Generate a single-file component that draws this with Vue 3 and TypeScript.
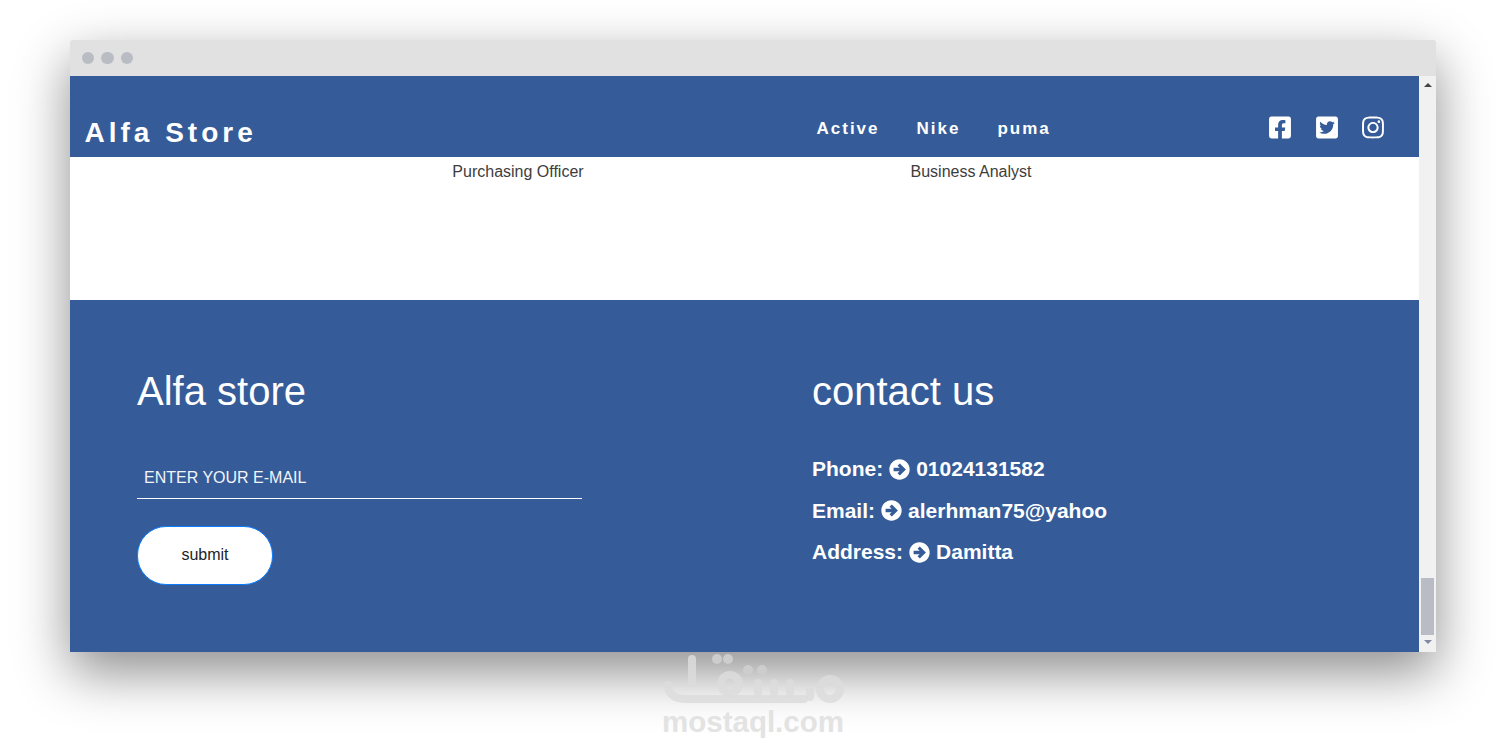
<script setup lang="ts">
const navLinks = ['Active', 'Nike', 'puma']

const people = ['Purchasing Officer', 'Business Analyst']

const contacts = [
  { label: 'Phone:', value: '01024131582' },
  { label: 'Email:', value: 'alerhman75@yahoo' },
  { label: 'Address:', value: 'Damitta' }
]
</script>

<template>
  <div class="stage">
    <div class="browser">
      <div class="titlebar">
        <span class="dot"></span>
        <span class="dot"></span>
        <span class="dot"></span>
      </div>

      <div class="viewport">
        <div class="page">
          <header class="navbar">
            <div class="brand">Alfa Store</div>
            <nav class="links">
              <a v-for="link in navLinks" :key="link">{{ link }}</a>
            </nav>
            <div class="social">
              <svg viewBox="0 0 448 512" class="social-icon">
                <path d="M400 32H48A48 48 0 0 0 0 80v352a48 48 0 0 0 48 48h137.25V327.69h-63V256h63v-54.64c0-62.15 37-96.48 93.67-96.48 27.14 0 55.52 4.84 55.52 4.84v61h-31.27c-30.81 0-40.42 19.12-40.42 38.73V256h68.78l-11 71.69h-57.78V480H400a48 48 0 0 0 48-48V80a48 48 0 0 0-48-48z" />
              </svg>
              <svg viewBox="0 0 448 512" class="social-icon">
                <path d="M400 32H48C21.5 32 0 53.5 0 80v352c0 26.5 21.5 48 48 48h352c26.5 0 48-21.5 48-48V80c0-26.5-21.5-48-48-48zm-48.9 158.8c.2 2.8.2 5.7.2 8.5 0 86.7-66 186.6-186.6 186.6-37.2 0-71.7-10.8-100.7-29.4 5.3.6 10.4.8 15.8.8 30.7 0 58.9-10.4 81.4-28-28.8-.6-53-19.5-61.3-45.5 10.1 1.5 19.2 1.5 29.6-1.2-30-6.1-52.5-32.5-52.5-64.4v-.8c8.7 4.9 18.9 7.9 29.6 8.3a65.447 65.447 0 0 1-29.2-54.6c0-12.2 3.2-23.4 8.9-33.1 32.3 39.8 80.8 65.8 135.2 68.6-9.3-44.5 24-80.6 64-80.6 18.9 0 35.9 7.9 47.9 20.7 14.8-2.8 29-7.2 41.6-14.8-4.9 15.2-15.2 28-28.8 36.1 13.2-1.4 26-5.1 37.8-10.2-8.9 13.1-20.1 24.7-32.9 34z" />
              </svg>
              <svg viewBox="0 0 448 512" class="social-icon">
                <path d="M224.1 141c-63.6 0-114.9 51.3-114.9 114.9s51.3 114.9 114.9 114.9S339 319.5 339 255.9 287.7 141 224.1 141zm0 189.6c-41.1 0-74.7-33.5-74.7-74.7s33.5-74.7 74.7-74.7 74.7 33.5 74.7 74.7-33.6 74.7-74.7 74.7zm146.4-194.3c0 14.9-12 26.8-26.8 26.8-14.9 0-26.8-12-26.8-26.8s12-26.8 26.8-26.8 26.8 12 26.8 26.8zm76.1 27.2c-1.7-35.9-9.9-67.7-36.2-93.9-26.2-26.2-58-34.4-93.9-36.2-37-2.1-147.9-2.1-184.9 0-35.8 1.7-67.6 9.9-93.9 36.1s-34.4 58-36.2 93.9c-2.1 37-2.1 147.9 0 184.9 1.7 35.9 9.9 67.7 36.2 93.9s58 34.4 93.9 36.2c37 2.1 147.9 2.1 184.9 0 35.9-1.7 67.7-9.9 93.9-36.2 26.2-26.2 34.4-58 36.2-93.9 2.1-37 2.1-147.8 0-184.8zM398.8 388c-7.8 19.6-22.9 34.7-42.6 42.6-29.5 11.7-99.5 9-132.1 9s-102.7 2.6-132.1-9c-19.6-7.8-34.7-22.9-42.6-42.6-11.7-29.5-9-99.5-9-132.1s-2.6-102.7 9-132.1c7.8-19.6 22.9-34.7 42.6-42.6 29.5-11.7 99.5-9 132.1-9s102.7-2.6 132.1 9c19.6 7.8 34.7 22.9 42.6 42.6 11.7 29.5 9 99.5 9 132.1s2.7 102.7-9 132.1z" />
              </svg>
            </div>
          </header>

          <section class="team">
            <p v-for="person in people" :key="person">{{ person }}</p>
          </section>

          <footer class="footer">
            <div class="col">
              <h2>Alfa store</h2>
              <input class="email" type="text" placeholder="ENTER YOUR E-MAIL" />
              <button class="submit" type="button">submit</button>
            </div>
            <div class="col">
              <h2>contact us</h2>
              <ul class="contact">
                <li v-for="item in contacts" :key="item.label">
                  <span>{{ item.label }}</span>
                  <svg viewBox="0 0 512 512" class="arrow">
                    <path fill-rule="evenodd" d="M256 8c137 0 248 111 248 248S393 504 256 504 8 393 8 256 119 8 256 8zM112 216v80h148l-52 52 56 56 148-148-148-148-56 56 52 52z" />
                  </svg>
                  <span>{{ item.value }}</span>
                </li>
              </ul>
            </div>
          </footer>
        </div>

        <div class="scrollbar">
          <span class="arrow-up"></span>
          <span class="thumb"></span>
          <span class="arrow-down"></span>
        </div>
      </div>
    </div>

    <!-- watermark over the shadow -->
    <div class="watermark">
      <svg class="mark" viewBox="0 0 182 52" width="182" height="52">
        <g fill="none" stroke="#dcdcdc" stroke-opacity="0.85" stroke-width="8" stroke-linecap="round">
          <path d="M30 6v24" />
          <path d="M6 32c0 10 8 14 18 14h118" />
          <circle cx="168" cy="36" r="10" />
          <circle cx="68" cy="31" r="9" />
          <path d="M96 30v10M112 30v10M128 30v10M148 38v6" />
        </g>
        <g fill="#cdcdcd">
          <circle cx="55" cy="6" r="5" />
          <circle cx="66" cy="6" r="5" />
          <circle cx="86" cy="17" r="5" />
          <circle cx="100" cy="17" r="5" />
        </g>
      </svg>
      <div class="mark-text">mostaql.com</div>
    </div>
  </div>
</template>

<style>
html,
body {
  margin: 0;
  background: #fff;
}
</style>

<style scoped>
.stage {
  position: relative;
  height: 752px;
  padding: 40px 70px 0;
  box-sizing: border-box;
  overflow: hidden;
  font-family: 'Liberation Sans', Arial, sans-serif;
}

.browser {
  width: 1366px;
  box-shadow: 0 20px 50px rgba(0, 0, 0, 0.45);
}

.titlebar {
  height: 36px;
  display: flex;
  align-items: center;
  gap: 7px;
  padding-left: 11.7px;
  background: #e1e1e1;
  border-radius: 2px 2px 0 0;
}

.dot {
  width: 12.5px;
  height: 12.5px;
  border-radius: 50%;
  background: #babcc4;
}

.viewport {
  display: flex;
  height: 576px;
}

.page {
  flex: 1;
  min-width: 0;
  background: #fff;
}

.navbar {
  height: 81px;
  display: flex;
  background: #355c99;
  color: #fff;
}

.brand {
  width: 746.5px;
  padding: 41px 0 0 14.5px;
  box-sizing: border-box;
  font-size: 28px;
  line-height: 32px;
  font-weight: 700;
  letter-spacing: 4px;
}

.links {
  display: flex;
  gap: 37px;
  padding-top: 43px;
  font-size: 17px;
  line-height: 19px;
  font-weight: 700;
  letter-spacing: 2px;
}

.social {
  margin-left: auto;
  display: flex;
  gap: 24.5px;
  padding: 39px 35px 0 0;
}

.social-icon {
  width: 22px;
  height: 25px;
  fill: #fff;
}

.team {
  height: 143px;
  display: grid;
  grid-template-columns: 453px 453px;
  justify-content: center;
  font-size: 16px;
  color: #3d3d3d;
  text-align: center;
}

.team p {
  margin: 5px 0 0;
  line-height: 19px;
}

.footer {
  height: 352px;
  display: grid;
  grid-template-columns: 675px 1fr;
  padding: 63px 0 0 67px;
  box-sizing: border-box;
  background: #355c99;
  color: #fff;
}

.footer h2 {
  margin: 0;
  font-size: 40px;
  line-height: 56px;
  font-weight: 400;
}

.email {
  display: block;
  width: 445px;
  height: 41px;
  margin-top: 39px;
  padding: 0 7px 1px;
  box-sizing: border-box;
  border: 0;
  border-bottom: 1px solid #fff;
  outline: none;
  background: transparent;
  color: #fff;
  font-family: inherit;
  font-size: 16px;
}

.email::placeholder {
  color: #f2f4f8;
  opacity: 1;
}

.submit {
  display: block;
  width: 136px;
  height: 59px;
  margin-top: 27px;
  padding: 0 0 2px;
  border: 1px solid #0a7cff;
  border-radius: 29px;
  background: #fff;
  color: #212529;
  font-family: inherit;
  font-size: 16px;
}

.contact {
  list-style: none;
  margin: 35px 0 0;
  padding: 0;
  font-size: 21px;
  line-height: 30px;
  font-weight: 700;
}

.contact li {
  display: flex;
  align-items: center;
  gap: 6px;
  margin-bottom: 11.5px;
}

.arrow {
  width: 21px;
  height: 21px;
  fill: #fff;
}

.scrollbar {
  width: 17px;
  display: flex;
  flex-direction: column;
  align-items: center;
  background: #f1f1f1;
}

.arrow-up {
  margin-top: 7px;
  border: 4px solid transparent;
  border-top: 0;
  border-bottom: 4px solid #444;
}

.thumb {
  width: 13px;
  height: 57px;
  margin-top: 491px;
  background: #b9bcc4;
}

.arrow-down {
  margin-top: 5px;
  border: 4px solid transparent;
  border-bottom: 0;
  border-top: 4px solid #7f8aa0;
}

.watermark {
  position: absolute;
  left: 661px;
  top: 653px;
  width: 184px;
  text-align: center;
  pointer-events: none;
}

.mark {
  display: block;
  margin: 0 auto;
}

.mark-text {
  font-size: 29.5px;
  line-height: 34px;
  font-weight: 700;
  color: #e3e3e3;
}
</style>
